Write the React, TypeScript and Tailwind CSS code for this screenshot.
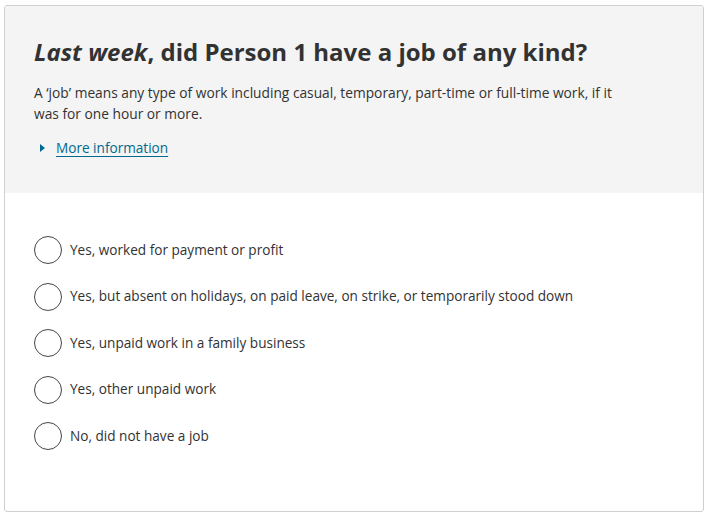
import { useState } from "react";

const options = [
  "Yes, worked for payment or profit",
  "Yes, but absent on holidays, on paid leave, on strike, or temporarily stood down",
  "Yes, unpaid work in a family business",
  "Yes, other unpaid work",
  "No, did not have a job",
];

export default function App() {
  const [selected, setSelected] = useState<number | null>(null);

  return (
    <div className="w-[708px] h-[515px] bg-white pt-[5px] px-[4px] font-['Open_Sans',sans-serif] text-[#323232]">
      <div className="w-[700px] h-[507px] border border-[#cfcfcf] rounded-[3px] overflow-hidden flex flex-col">
        <div className="bg-[#f4f4f4] h-[187px] pl-[29px] pt-[30px]">
          <h1 className="text-[24px] leading-[32px] font-bold">
            <em>Last week</em>, did Person 1 have a job of any kind?
          </h1>
          <p className="mt-[14px] text-[13.75px] leading-[21px] max-w-[590px]">
            A ‘job’ means any type of work including casual, temporary, part-time or full-time work, if it was for one hour or more.
          </p>
          <button className="mt-[14px] ml-[6px] flex items-center gap-[11px] text-[13.6px] text-[#00698f]">
            <svg width="5" height="8" viewBox="0 0 5 8">
              <path d="M0 0 L5 4 L0 8 Z" fill="#00698f" />
            </svg>
            <span className="underline underline-offset-[3px]">More information</span>
          </button>
        </div>
        <div className="pl-[29px] pt-[43px] flex flex-col gap-[18.5px]">
          {options.map((o, i) => (
            <label key={o} className="flex items-center gap-[8px] cursor-pointer text-[13.6px]" onClick={() => setSelected(i)}>
              <span className="w-[28px] h-[28px] rounded-full border border-[#444] bg-white flex items-center justify-center">
                {selected === i && <span className="w-[14px] h-[14px] rounded-full bg-[#444]" />}
              </span>
              <span>{o}</span>
            </label>
          ))}
        </div>
      </div>
    </div>
  );
}
